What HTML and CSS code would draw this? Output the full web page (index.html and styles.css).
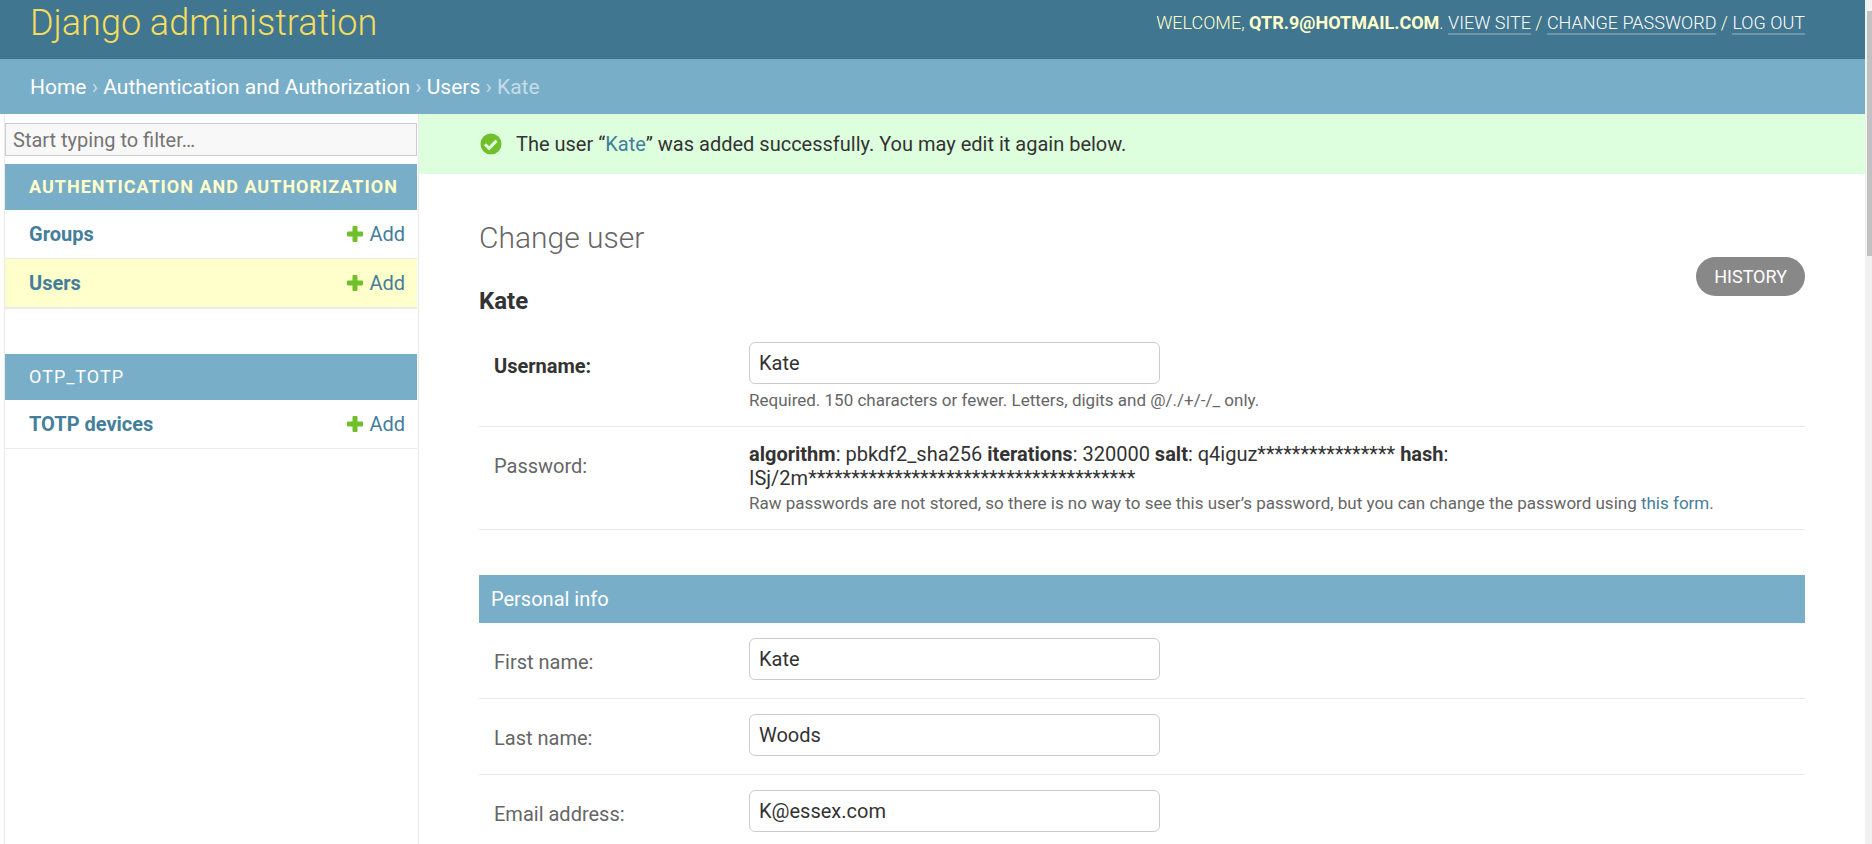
FILE: index.html
```html
<!DOCTYPE html>
<html lang="en">
<head>
<meta charset="utf-8">
<title>Kate | Change user | Django site admin</title>
<link rel="stylesheet" href="styles.css">
</head>
<body>
<svg class="sprite" aria-hidden="true">
  <symbol id="plus" viewBox="0 0 16 16"><path fill="#70bf2b" d="M6.500 0h3a1 1 0 0 1 1 1v4.500H15a1 1 0 0 1 1 1v3a1 1 0 0 1-1 1h-4.500V15a1 1 0 0 1-1 1h-3a1 1 0 0 1-1-1v-4.500H1a1 1 0 0 1-1-1v-3a1 1 0 0 1 1-1h4.500V1a1 1 0 0 1 1-1z"/></symbol>
</svg>
<div class="shell">
  <div class="page">
    <header class="header">
      <a class="brand" href="#">Django administration</a>
      <div class="user-tools">Welcome, <strong>qtr.9@hotmail.com</strong>. <a href="#">View site</a> / <a href="#">Change password</a> / <a href="#">Log out</a></div>
    </header>
    <nav class="breadcrumbs" aria-label="Breadcrumbs"><a href="#">Home</a> › <a href="#">Authentication and Authorization</a> › <a href="#">Users</a> › Kate</nav>
    <div class="main">
      <nav class="sidebar" aria-label="Sidebar">
        <input class="filter" type="search" placeholder="Start typing to filter…" aria-label="Filter navigation items">
        <section class="app">
          <h2 class="caption current"><a href="#">Authentication and Authorization</a></h2>
          <div class="model"><a class="name" href="#">Groups</a><a class="add" href="#"><svg class="plus"><use href="#plus"/></svg>Add</a></div>
          <div class="model active"><a class="name" href="#">Users</a><a class="add" href="#"><svg class="plus"><use href="#plus"/></svg>Add</a></div>
        </section>
        <section class="app">
          <h2 class="caption"><a href="#">OTP_TOTP</a></h2>
          <div class="model"><a class="name" href="#">TOTP devices</a><a class="add" href="#"><svg class="plus"><use href="#plus"/></svg>Add</a></div>
        </section>
      </nav>
      <main class="content">
        <div class="message">
          <svg class="tick" viewBox="0 0 24 24" aria-hidden="true"><circle cx="12" cy="12" r="10.500" fill="#70bf2b"/><path d="M6 12.200l4.200 4.200 7.400-7.800" fill="none" stroke="#ddffdd" stroke-width="3"/></svg>
          <span>The user “<a href="#">Kate</a>” was added successfully. You may edit it again below.</span>
        </div>
        <div class="body">
          <h1 class="title">Change user</h1>
          <div class="subhead">
            <h2 class="object">Kate</h2>
            <a class="history" href="#">History</a>
          </div>
          <form class="form">
            <div class="row">
              <label class="label required" for="username">Username:</label>
              <div class="field"><input class="text" id="username" type="text" value="Kate">
                <p class="help">Required. 150 characters or fewer. Letters, digits and @/./+/-/_ only.</p></div>
            </div>
            <div class="row">
              <span class="label">Password:</span>
              <div class="field"><p><strong>algorithm</strong>: pbkdf2_sha256 <strong>iterations</strong>: 320000 <strong>salt</strong>: q4iguz**************** <strong>hash</strong>:<br>ISj/2m**************************************</p>
                <p class="help">Raw passwords are not stored, so there is no way to see this user’s password, but you can change the password using <a href="#">this form</a>.</p></div>
            </div>
            <h2 class="module">Personal info</h2>
            <div class="row">
              <label class="label" for="first">First name:</label>
              <div class="field"><input class="text" id="first" type="text" value="Kate"></div>
            </div>
            <div class="row">
              <label class="label" for="last">Last name:</label>
              <div class="field"><input class="text" id="last" type="text" value="Woods"></div>
            </div>
            <div class="row">
              <label class="label" for="email">Email address:</label>
              <div class="field"><input class="text" id="email" type="email" value="K@essex.com"></div>
            </div>
          </form>
        </div>
      </main>
    </div>
  </div>
  <div class="scrollbar"><div class="thumb"></div></div>
</div>
</body>
</html>
```

FILE: styles.css
```css
* { box-sizing: border-box; }
body {
  margin: 0;
  font-family: Roboto, "Liberation Sans", sans-serif;
  font-size: 20px;
  line-height: 24px;
  color: #333;
  background: #fff;
}
h1, h2, p { margin: 0; }
a { color: #447e9b; text-decoration: none; }
.sprite { position: absolute; width: 0; height: 0; }

.shell { display: flex; height: 100vh; }
.page {
  flex: 1;
  min-width: 0;
  display: flex;
  flex-direction: column;
  overflow-y: auto;
  scrollbar-width: none;
}
.scrollbar { flex: none; width: 7px; padding: 11px 0 0 2px; background: #f1f1f1; }
.thumb { height: 245px; background: #c1c1c1; }

.header {
  display: flex;
  justify-content: space-between;
  align-items: center;
  padding: 0 60px 13px 30px;
  background: #417690;
  color: #ffc;
}
.brand { font-size: 36px; font-weight: 300; line-height: 46px; color: #f5dd5d; }
.user-tools { font-size: 18px; font-weight: 300; text-transform: uppercase; }
.user-tools strong { font-weight: 700; }
.user-tools a { color: #fff; border-bottom: 2px solid rgba(255, 255, 255, .25); }

.breadcrumbs { padding: 16px 30px 15px; font-size: 21px; background: #79aec8; color: #c4dce8; }
.breadcrumbs a { color: #fff; }

.main { display: flex; flex: 1 0 auto; }
.sidebar {
  flex: none;
  width: 415px;
  margin-left: 4px;
  padding: 9px 1px 0 0;
  border: solid #eaeaea;
  border-width: 0 1px;
}
.filter {
  display: block;
  width: 100%;
  height: 33px;
  margin-bottom: 8px;
  padding: 0 7px;
  border: 1px solid #ccc;
  border-radius: 0;
  appearance: none;
  outline: 0;
  background: #f8f8f8;
  font: inherit;
}
.filter::placeholder { color: #757575; }
.app { margin-bottom: 45px; }
.caption {
  padding: 11px 12px 11px 24px;
  font-size: 18px;
  font-weight: 400;
  letter-spacing: 1px;
  text-transform: uppercase;
  background: #79aec8;
}
.caption a { color: #fff; }
.current { font-weight: 700; }
.current a { color: #ffc; }
.model {
  display: flex;
  justify-content: space-between;
  padding: 12px 12px 12px 24px;
  border-bottom: 1px solid #eaeaea;
}
.active { border-bottom-width: 2px; background: #ffc; }
.name { font-weight: 700; }
.add { display: flex; align-items: center; gap: 6px; }
.plus { width: 16px; height: 16px; }

.content { flex: 1; min-width: 0; }
.message {
  display: flex;
  align-items: center;
  gap: 13px;
  padding: 18px 60px;
  background: #dfd;
}
.tick { width: 24px; height: 24px; }
.body { padding: 45px 60px 0; }
.title { font-size: 30px; font-weight: 300; line-height: 38px; color: #666; }
.subhead { display: flex; justify-content: space-between; align-items: flex-start; }
.object { padding-top: 32px; font-size: 24px; font-weight: 700; }
.history {
  padding: 8px 18px 7px;
  border-radius: 20px;
  background: #888;
  color: #fff;
  font-size: 18px;
  text-transform: uppercase;
}
.form { padding-top: 14px; }
.row {
  display: flex;
  padding: 15px;
  border-bottom: 1px solid #eaeaea;
}
.label { flex: none; width: 255px; padding-top: 12px; color: #666; }
.required { font-weight: 700; color: #333; }
.field { flex: 1; min-width: 0; }
.text {
  display: block;
  width: 411px;
  height: 42px;
  margin-bottom: 3px;
  padding: 0 9px;
  border: 1px solid #ccc;
  border-radius: 6px;
  background: #fff;
  color: #333;
  font: inherit;
}
.help { padding-top: 3px; font-size: 17px; line-height: 21px; color: #666; }
.module {
  margin-top: 45px;
  padding: 12px;
  font-size: 20px;
  font-weight: 400;
  background: #79aec8;
  color: #fff;
}
```
